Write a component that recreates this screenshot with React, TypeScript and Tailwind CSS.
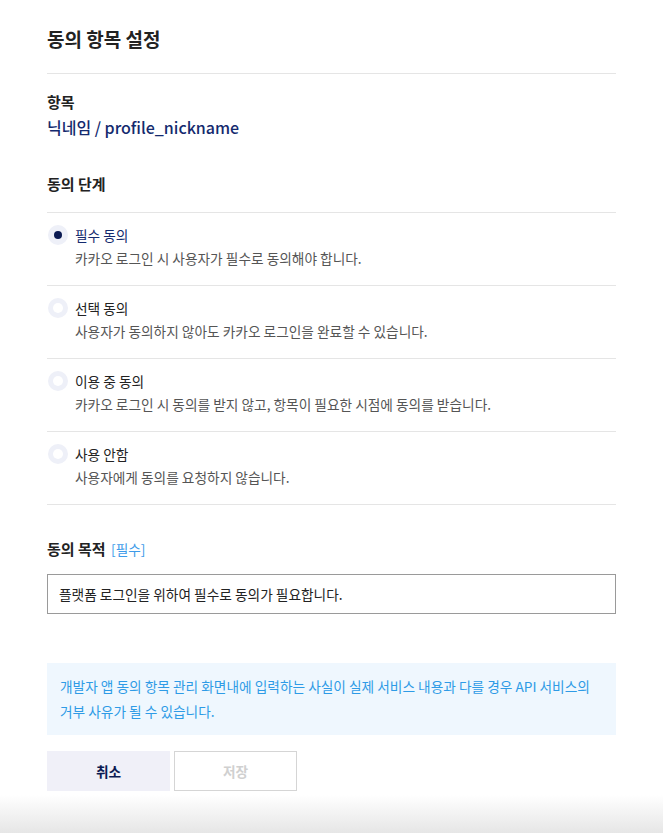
import { useState } from "react";

const options = [
  { key: "required", title: "필수 동의", desc: "카카오 로그인 시 사용자가 필수로 동의해야 합니다." },
  { key: "optional", title: "선택 동의", desc: "사용자가 동의하지 않아도 카카오 로그인을 완료할 수 있습니다." },
  { key: "inuse", title: "이용 중 동의", desc: "카카오 로그인 시 동의를 받지 않고, 항목이 필요한 시점에 동의를 받습니다." },
  { key: "none", title: "사용 안함", desc: "사용자에게 동의를 요청하지 않습니다." },
];

function Radio({ checked }: { checked: boolean }) {
  return (
    <span className="w-5 h-5 rounded-full bg-[#eef0f8] flex items-center justify-center shrink-0">
      {checked ? (
        <span className="w-2 h-2 rounded-full bg-[#0b1a52]" />
      ) : (
        <span className="w-[10px] h-[10px] rounded-full bg-white" />
      )}
    </span>
  );
}

export default function App() {
  const [level, setLevel] = useState("required");
  const [purpose, setPurpose] = useState("플랫폼 로그인을 위하여 필수로 동의가 필요합니다.");

  return (
    <div
      className="relative w-[663px] h-[833px] bg-white text-[#222] overflow-hidden"
      style={{ fontFamily: '"Noto Sans CJK KR", "Noto Sans", sans-serif' }}
    >
      <div className="px-[47px] w-full">
        {/* Header */}
        <div className="pt-[24px] pb-[19px] border-b border-[#e5e5e5]">
          <h1 className="text-[19px] leading-[30px] font-bold">동의 항목 설정</h1>
        </div>

        {/* Item */}
        <div className="pt-[17px]">
          <p className="text-[15px] leading-[22px] font-bold">항목</p>
          <p className="mt-[3px] text-[16px] leading-[22px] font-medium text-[#142a6e]">닉네임 / profile_nickname</p>
        </div>

        {/* Consent level */}
        <div className="pt-[35px]">
          <p className="text-[15px] leading-[22px] font-bold pb-[17px] border-b border-[#e5e5e5]">동의 단계</p>
          <ul>
            {options.map((o) => (
              <li
                key={o.key}
                onClick={() => setLevel(o.key)}
                className="border-b border-[#e5e5e5] pt-[12px] pb-[17px] cursor-pointer"
              >
                <div className="flex items-center gap-[7px] pl-px">
                  <Radio checked={level === o.key} />
                  <span
                    className={`text-[13.7px] leading-[20px] ${
                      level === o.key ? "text-[#142a6e]" : "text-[#222]"
                    }`}
                  >
                    {o.title}
                  </span>
                </div>
                <p className="pl-[28px] mt-[3px] text-[13.7px] leading-[20px] text-[#555]">{o.desc}</p>
              </li>
            ))}
          </ul>
        </div>

        {/* Purpose */}
        <div className="pt-[33px]">
          <p className="text-[15px] leading-[22px] font-bold">
            동의 목적 <span className="text-[13.7px] font-normal text-[#3d9be9] ml-[2px]">[필수]</span>
          </p>
          <input
            value={purpose}
            onChange={(e) => setPurpose(e.target.value)}
            className="mt-[14px] w-full h-[40px] border border-[#9a9a9a] px-[11px] text-[13.7px] text-[#222] outline-none"
          />
        </div>

        {/* Notice */}
        <div className="mt-[49px] bg-[#eff7fe] px-[13px] py-[11px] text-[13.7px] leading-[25px] text-[#2e9be6]">
          개발자 앱 동의 항목 관리 화면내에 입력하는 사실이 실제 서비스 내용과 다를 경우 API 서비스의 거부 사유가 될 수 있습니다.
        </div>

        {/* Buttons */}
        <div className="mt-[16px] flex gap-[4px]">
          <button className="w-[123px] h-[40px] bg-[#f0f0f8] text-[13.7px] font-bold text-[#0b1a52]">취소</button>
          <button disabled className="w-[123px] h-[40px] border border-[#d5d5d5] bg-white text-[13.7px] font-bold text-[#d0d0d0]">
            저장
          </button>
        </div>
      </div>

      {/* bottom fade */}
      <div className="absolute left-0 right-0 bottom-0 h-[38px] bg-gradient-to-b from-white to-[#e6e6e6]" />
    </div>
  );
}
